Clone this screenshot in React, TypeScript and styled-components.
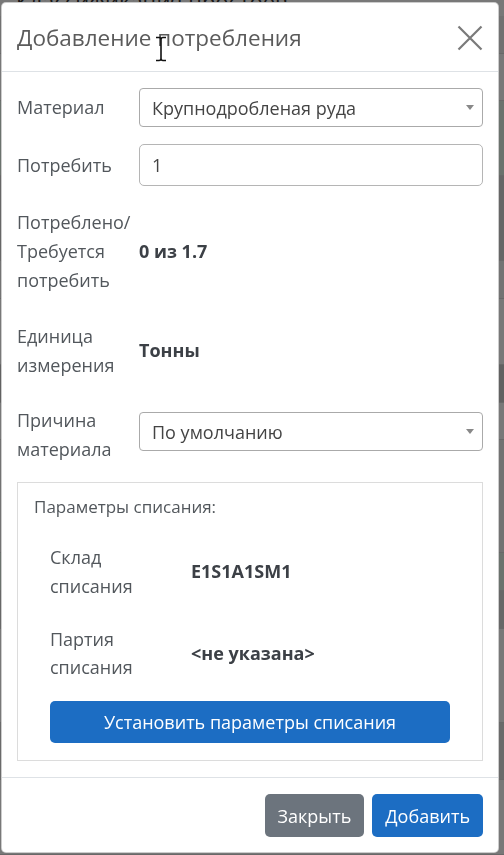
import React from "react";
import styled, { createGlobalStyle } from "styled-components";

const GlobalStyle = createGlobalStyle`
  html, body { margin: 0; padding: 0; }
  body {
    font-family: "Open Sans", "Noto Sans", "Liberation Sans", sans-serif;
    background: #ffffff;
    overflow: hidden;
  }
  * { box-sizing: border-box; }
`;

/* ---------- underlying page (dimmed by backdrop) ---------- */
const Page = styled.div`
  width: 504px;
  height: 855px;
  background: #ffffff;
  display: flex;
  flex-direction: column;
  overflow: hidden;
`;

const PageTitle = styled.div`
  margin-top: -14px;
  padding-left: 16px;
  font-size: 22px;
  line-height: 30px;
  color: #333;
`;

const PageRow = styled.div<{ $tone: string; $h: number }>`
  height: ${(p) => p.$h}px;
  background: ${(p) => p.$tone};
  border-bottom: 1px solid #dddddd;
`;

const Backdrop = styled.div`
  position: fixed;
  inset: 0;
  background: rgba(0, 0, 0, 0.53);
`;

/* ---------- modal ---------- */
const ModalLayer = styled.div`
  position: fixed;
  inset: 0;
  padding: 2px 5px 0 1px;
`;

const Dialog = styled.div`
  width: 498px;
  height: 851px;
  background: #fff;
  border: 1px solid rgba(0, 0, 0, 0.2);
  border-radius: 5px;
  display: flex;
  flex-direction: column;
  position: relative;
`;

const Header = styled.div`
  display: flex;
  align-items: center;
  justify-content: space-between;
  padding: 16px 14px 15px 15px;
  border-bottom: 1px solid #dee2e6;
  position: relative;
`;

const Title = styled.h5`
  margin: 0;
  font-size: 22.5px;
  line-height: 37px;
  font-weight: 400;
  color: #5b5b5b;
`;

const CloseButton = styled.button`
  border: 0;
  background: transparent;
  padding: 0;
  width: 28px;
  height: 28px;
  display: flex;
  align-items: center;
  justify-content: center;
  cursor: pointer;
`;

const Cursor = styled.svg`
  position: absolute;
  left: 153px;
  top: 33px;
`;

const Body = styled.div`
  flex: 1;
  padding: 16px 15px 16px 15px;
  display: flex;
  flex-direction: column;
`;

const FormRow = styled.div<{ $mb: number }>`
  display: grid;
  grid-template-columns: 122px 1fr;
  align-items: center;
  margin-bottom: ${(p) => p.$mb}px;
`;

const Label = styled.div`
  font-size: 18px;
  line-height: 29px;
  color: #52575c;
`;

const Value = styled.div`
  font-size: 18px;
  line-height: 29px;
  font-weight: 700;
  color: #3c4046;
`;

const SelectBox = styled.div<{ $lift?: number }>`
  height: 39px;
  border: 1px solid #aaaaaa;
  border-radius: 4px;
  padding: 0 12px;
  margin-bottom: ${(p) => (p.$lift ? p.$lift * 2 : 0)}px;
  display: flex;
  align-items: center;
  justify-content: space-between;
  font-size: 18px;
  color: #444;
`;

const Arrow = styled.span`
  width: 0;
  height: 0;
  border-style: solid;
  border-width: 5px 4px 0 4px;
  border-color: #888 transparent transparent transparent;
  margin-right: -4px;
`;

const Input = styled.input`
  height: 42px;
  width: 100%;
  border: 1px solid #b5b5b5;
  border-radius: 5px;
  padding: 0 12px;
  font-family: inherit;
  font-size: 18px;
  color: #444;
  outline: none;
`;

const Panel = styled.div`
  border: 1px solid #dcdcdc;
  padding: 12px 16px 17px 16px;
  display: flex;
  flex-direction: column;
`;

const PanelTitle = styled.div`
  font-size: 17px;
  line-height: 24px;
  color: #52575c;
  margin-bottom: 24px;
`;

const PanelRows = styled.div`
  padding: 0 16px;
  display: flex;
  flex-direction: column;
`;

const SubRow = styled.div<{ $mb: number }>`
  display: grid;
  grid-template-columns: 141px 1fr;
  align-items: center;
  margin-bottom: ${(p) => p.$mb}px;
`;

const SubLabel = styled.div`
  font-size: 18px;
  line-height: 28.5px;
  color: #52575c;
`;

const Button = styled.button<{ $variant: "primary" | "secondary"; $block?: boolean }>`
  border: 0;
  border-radius: 5px;
  height: ${(p) => (p.$block ? 42 : 43)}px;
  padding: 0 ${(p) => (p.$block ? 12 : 13)}px;
  width: ${(p) => (p.$block ? "100%" : "auto")};
  font-family: inherit;
  font-size: 18px;
  color: #fff;
  background: ${(p) => (p.$variant === "primary" ? "#1c6dc3" : "#6c747d")};
  cursor: pointer;
`;

const Footer = styled.div`
  display: flex;
  justify-content: flex-end;
  align-items: center;
  gap: 8px;
  padding: 16px 15px 15px 15px;
  border-top: 1px solid #dee2e6;
`;

const bgRows: Array<[string, number]> = [
  ["#f0f0f0", 40],
  ["#ffffff", 50],
  ["#e4f2e8", 80],
  ["#d8d8d8", 90],
  ["#f4f4f4", 40],
  ["#ffffff", 70],
  ["#cfcfcf", 40],
  ["#ffffff", 40],
  ["#f2f2f2", 120],
  ["#e4f2e8", 40],
  ["#dcdcdc", 40],
  ["#ffffff", 100],
  ["#e2e2e2", 60],
  ["#ffffff", 80],
];

export default function App() {
  return (
    <>
      <GlobalStyle />
      <Page>
        <PageTitle>Классификация простоев</PageTitle>
        {bgRows.map(([tone, h], i) => (
          <PageRow key={i} $tone={tone} $h={h} />
        ))}
      </Page>
      <Backdrop />
      <ModalLayer>
        <Dialog>
          <Header>
            <Title>Добавление потребления</Title>
            <CloseButton aria-label="Закрыть">
              <svg width="26" height="26" viewBox="0 0 26 26">
                <path d="M1.5 1.5 L24.5 24.5 M24.5 1.5 L1.5 24.5" stroke="#7a7a7a" strokeWidth="2.2" fill="none" />
              </svg>
            </CloseButton>
            <Cursor width="12" height="26" viewBox="0 0 12 26">
              <path d="M1 1.5 H4 Q6 1.5 6 3.5 Q6 1.5 8 1.5 H11 M6 3.5 V22.5 M1 24.5 H4 Q6 24.5 6 22.5 Q6 24.5 8 24.5 H11" stroke="#111" strokeWidth="1.6" fill="none" />
            </Cursor>
          </Header>
          <Body>
            <FormRow $mb={17}>
              <Label>Материал</Label>
              <SelectBox>
                <span>Крупнодробленая руда</span>
                <Arrow />
              </SelectBox>
            </FormRow>
            <FormRow $mb={21.5}>
              <Label>Потребить</Label>
              <Input defaultValue="1" />
            </FormRow>
            <FormRow $mb={27}>
              <Label>
                Потреблено/
                <br />
                Требуется
                <br />
                потребить
              </Label>
              <Value>0 из 1.7</Value>
            </FormRow>
            <FormRow $mb={26}>
              <Label>
                Единица
                <br />
                измерения
              </Label>
              <Value>Тонны</Value>
            </FormRow>
            <FormRow $mb={18.5}>
              <Label>
                Причина
                <br />
                материала
              </Label>
              <SelectBox $lift={3}>
                <span>По умолчанию</span>
                <Arrow />
              </SelectBox>
            </FormRow>
            <Panel>
              <PanelTitle>Параметры списания:</PanelTitle>
              <PanelRows>
                <SubRow $mb={24.5}>
                  <SubLabel>
                    Склад
                    <br />
                    списания
                  </SubLabel>
                  <Value>E1S1A1SM1</Value>
                </SubRow>
                <SubRow $mb={19}>
                  <SubLabel>
                    Партия
                    <br />
                    списания
                  </SubLabel>
                  <Value>&lt;не указана&gt;</Value>
                </SubRow>
                <Button $variant="primary" $block>
                  Установить параметры списания
                </Button>
              </PanelRows>
            </Panel>
          </Body>
          <Footer>
            <Button $variant="secondary">Закрыть</Button>
            <Button $variant="primary">Добавить</Button>
          </Footer>
        </Dialog>
      </ModalLayer>
    </>
  );
}
